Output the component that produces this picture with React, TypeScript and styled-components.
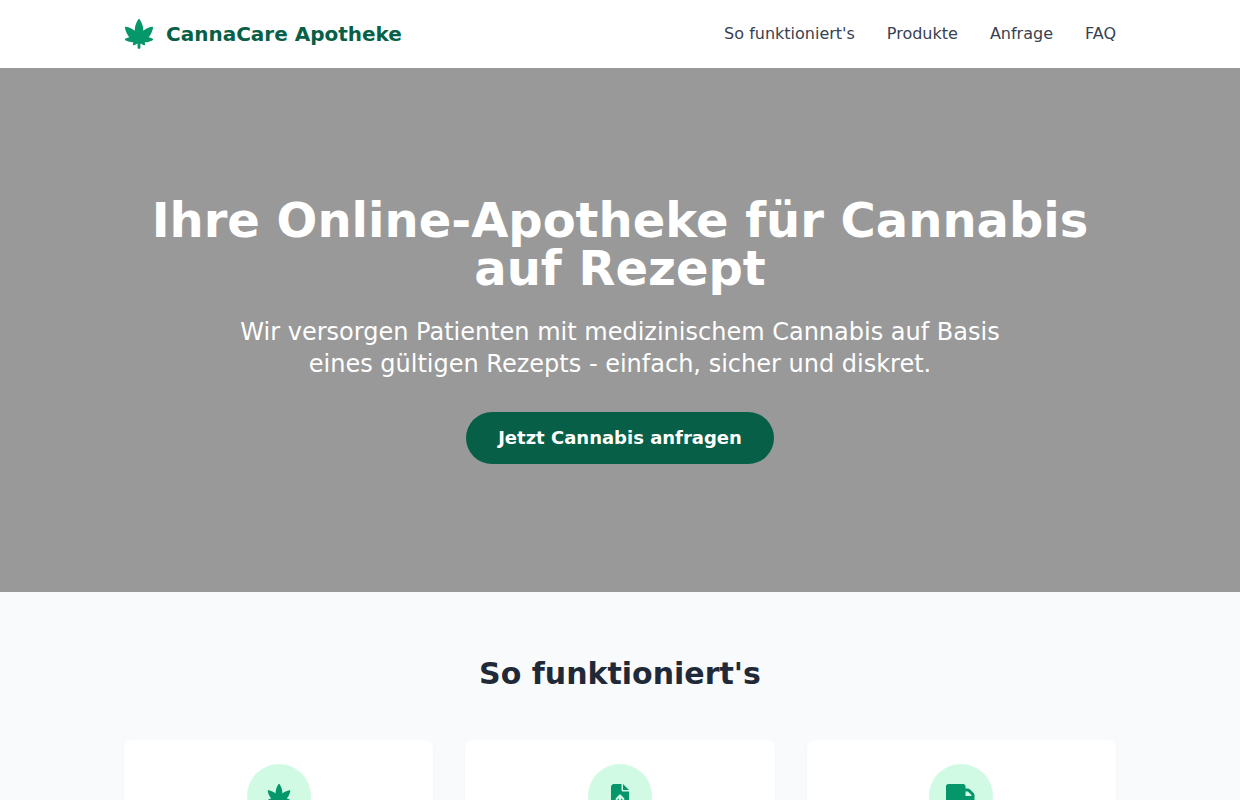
import React from "react";
import styled, { createGlobalStyle } from "styled-components";
import { FaCannabis, FaFileArrowUp, FaTruck } from "react-icons/fa6";

const GlobalStyle = createGlobalStyle`
  *, *::before, *::after { box-sizing: border-box; }
  body {
    margin: 0;
    background: #f9fafb;
    font-family: "DejaVu Sans", sans-serif;
    font-size: 16px;
    line-height: 24px;
  }
  h1, h2, h3, p, ul, ol { margin: 0; padding: 0; }
`;

const Container = styled.div`
  width: 100%;
  max-width: 1024px;
  margin: 0 auto;
  padding: 0 16px;
`;

const Header = styled.header`
  background: #fff;
`;

const HeaderInner = styled(Container)`
  display: flex;
  align-items: center;
  justify-content: space-between;
  padding-top: 16px;
  padding-bottom: 16px;
`;

const Brand = styled.a`
  display: flex;
  align-items: center;
  gap: 12px;
  color: #065f46;
  font-size: 20px;
  line-height: 28px;
  font-weight: 700;
  text-decoration: none;

  svg {
    width: 30px;
    height: 36px;
    color: #059669;
  }
`;

const Nav = styled.nav`
  display: flex;
  gap: 32px;
`;

const NavLink = styled.a`
  color: #374151;
  text-decoration: none;
  &:hover { color: #059669; }
`;

const Hero = styled.section`
  padding: 128px 0;
  background: #999;
  color: #fff;
  text-align: center;
`;

const HeroTitle = styled.h1`
  margin-bottom: 24px;
  font-size: 48px;
  line-height: 48px;
  font-weight: 700;
`;

const HeroText = styled.p`
  max-width: 768px;
  margin: 0 auto 32px;
  font-size: 24px;
  line-height: 32px;
`;

const HeroButton = styled.button`
  padding: 12px 32px;
  border: 0;
  border-radius: 9999px;
  background: #065f46;
  color: #fff;
  font: 700 18px/28px "DejaVu Sans", sans-serif;
  cursor: pointer;
`;

const Steps = styled.section`
  padding: 64px 0;
  background: #f9fafb;
`;

const SectionTitle = styled.h2`
  margin-bottom: 48px;
  color: #1f2937;
  font-size: 30px;
  line-height: 36px;
  font-weight: 700;
  text-align: center;
`;

const StepGrid = styled.ol`
  display: grid;
  grid-template-columns: repeat(3, 1fr);
  gap: 32px;
  list-style: none;
`;

const StepCard = styled.li`
  padding: 24px;
  border-radius: 8px;
  background: #fff;
  box-shadow: 0 1px 2px rgba(0, 0, 0, 0.05);
`;

const StepIcon = styled.div`
  display: flex;
  align-items: center;
  justify-content: center;
  width: 64px;
  height: 64px;
  margin: 0 auto;
  border-radius: 50%;
  background: #d1fae5;
  color: #059669;

  svg {
    width: 30px;
    height: 24px;
  }
`;

const links = [
  { label: "So funktioniert's", href: "#ablauf" },
  { label: "Produkte", href: "#produkte" },
  { label: "Anfrage", href: "#anfrage" },
  { label: "FAQ", href: "#faq" },
];

const stepIcons = [FaCannabis, FaFileArrowUp, FaTruck];

export default function App() {
  return (
    <>
      <GlobalStyle />
      <Header>
        <HeaderInner>
          <Brand href="#">
            <FaCannabis aria-hidden />
            CannaCare Apotheke
          </Brand>
          <Nav>
            {links.map((link) => (
              <NavLink key={link.href} href={link.href}>{link.label}</NavLink>
            ))}
          </Nav>
        </HeaderInner>
      </Header>
      <main>
        <Hero>
          <Container>
            <HeroTitle>Ihre Online-Apotheke für Cannabis auf Rezept</HeroTitle>
            <HeroText>
              Wir versorgen Patienten mit medizinischem Cannabis auf Basis eines gültigen Rezepts - einfach, sicher und diskret.
            </HeroText>
            <HeroButton type="button">Jetzt Cannabis anfragen</HeroButton>
          </Container>
        </Hero>
        <Steps id="ablauf">
          <Container>
            <SectionTitle>So funktioniert's</SectionTitle>
            <StepGrid>
              {stepIcons.map((Icon, index) => (
                <StepCard key={index}>
                  <StepIcon>
                    <Icon aria-hidden />
                  </StepIcon>
                </StepCard>
              ))}
            </StepGrid>
          </Container>
        </Steps>
      </main>
    </>
  );
}
